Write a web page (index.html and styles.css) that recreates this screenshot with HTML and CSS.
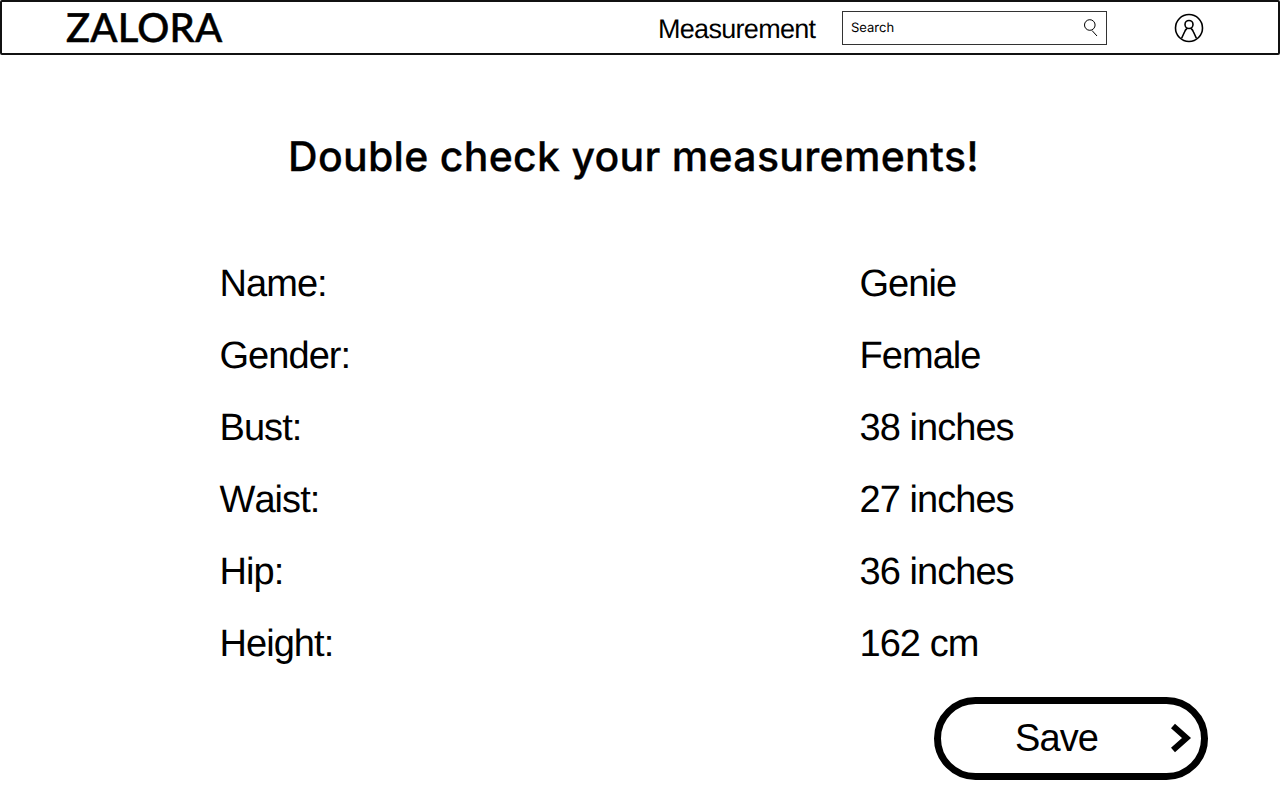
FILE: index.html
```html
<!DOCTYPE html>
<html lang="en">
<head>
    <meta charset="UTF-8">
    <meta name="viewport" content="width=device-width, initial-scale=1.0">
    <title>Measurement</title>
    <link rel="stylesheet" href="styles.css">
</head>
<body>
    <header class="topbar">
        <div class="logo">ZALORA</div>
        <div class="page-name">Measurement</div>
        <div class="search">
            <span class="search-text">Search</span>
            <svg class="search-icon" width="16" height="18" viewBox="0 0 16 18" fill="none" stroke="#000" stroke-width="1">
                <circle cx="6.8" cy="6" r="5.3"/>
                <path d="M9 11.5L14 17"/>
            </svg>
        </div>
        <svg class="user-icon" width="30" height="30" viewBox="0 0 30 30" fill="none" stroke="#000" stroke-width="1.6">
            <circle cx="15" cy="15" r="13.5"/>
            <circle cx="15" cy="11.5" r="4"/>
            <path d="M7.5 25.5L10.5 19Q11.5 16.5 13 15.5M22.5 25.5L19.5 19Q18.5 16.5 17 15.5"/>
        </svg>
    </header>

    <main class="content">
        <h1>Double check your measurements!</h1>
        <div class="details">
            <div>Name:</div><div>Genie</div>
            <div>Gender:</div><div>Female</div>
            <div>Bust:</div><div>38 inches</div>
            <div>Waist:</div><div>27 inches</div>
            <div>Hip:</div><div>36 inches</div>
            <div>Height:</div><div>162 cm</div>
        </div>
        <div class="actions">
            <button class="save" type="button">
                <span>Save</span>
                <svg class="chevron" width="22" height="30" viewBox="0 0 22 30" fill="none" stroke="#000" stroke-width="6">
                    <path d="M3 3L16.5 15L3 27"/>
                </svg>
            </button>
        </div>
    </main>
</body>
</html>
```

FILE: styles.css
```css
body {
    margin: 0;
    background-color: white;
    color: black;
    font-family: 'Liberation Sans', Arial, sans-serif;
    text-rendering: geometricPrecision;
}
.topbar {
    display: flex;
    align-items: center;
    height: 55px;
    box-sizing: border-box;
    border: 2px solid #111;
    border-radius: 2px;
    padding-left: 64px;
}
.logo {
    width: 592px;
    margin-bottom: 2px;
    font-family: 'Lato', sans-serif;
    font-size: 40px;
    font-weight: 500;
    letter-spacing: 0.2px;
    line-height: 50px;
    -webkit-text-stroke: 0.5px black;
}
.page-name {
    width: 184px;
    margin-top: 3px;
    font-size: 27px;
    letter-spacing: -0.7px;
}
.search {
    display: flex;
    align-items: center;
    justify-content: space-between;
    width: 265px;
    height: 34px;
    box-sizing: border-box;
    border: 1px solid #333;
    padding: 0 7px 0 8px;
}
.search-text {
    font-family: 'Inter', sans-serif;
    font-size: 13px;
}
.user-icon {
    margin-left: 67px;
}
.content {
    display: flex;
    flex-direction: column;
}
h1 {
    margin: 71px 0 0 288px;
    font-family: 'Inter', sans-serif;
    font-size: 41px;
    font-weight: 500;
    letter-spacing: 0.29px;
    line-height: 60px;
    white-space: nowrap;
    -webkit-text-stroke: 0.3px black;
}
.details {
    display: grid;
    grid-template-columns: 640px 1fr;
    grid-auto-rows: 72px;
    align-items: center;
    margin: 62px 0 0 219.5px;
    font-size: 38px;
    letter-spacing: -0.95px;
    font-kerning: none;
}
.actions {
    display: flex;
    justify-content: flex-end;
    margin: 17px 72.5px 0 0;
}
.save {
    position: relative;
    width: 274px;
    height: 83px;
    box-sizing: border-box;
    border: 7px solid black;
    border-radius: 42px;
    background: white;
    color: black;
    font-family: inherit;
    font-size: 38px;
    letter-spacing: -0.95px;
    padding: 0 28px 0 0;
}
.chevron {
    position: absolute;
    right: 9px;
    top: 19px;
}
```
